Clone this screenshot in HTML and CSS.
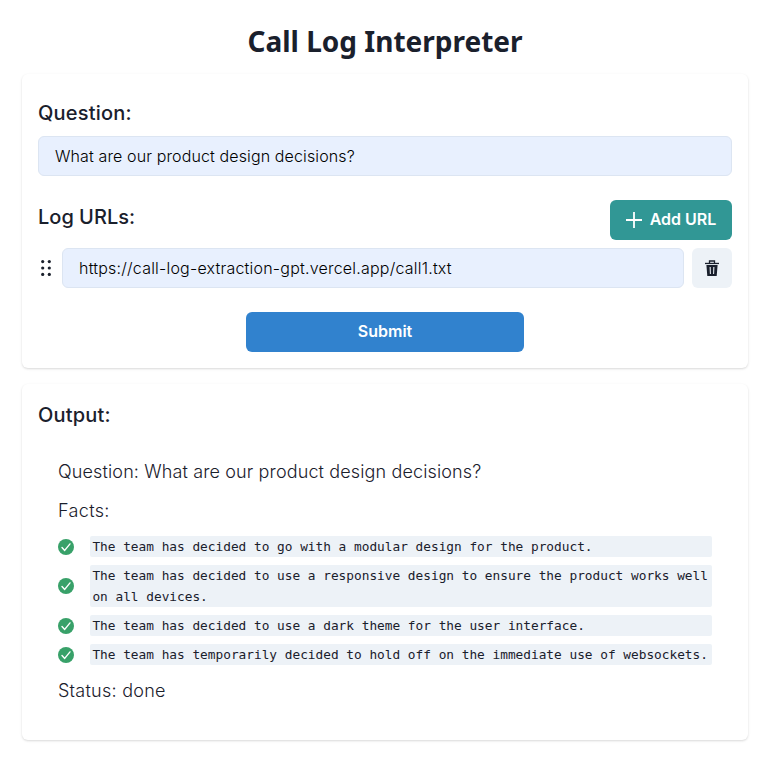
FILE: index.html
```html
<!DOCTYPE html>
<html lang="en">
<head>
<meta charset="utf-8">
<title>Call Log Interpreter</title>
<link rel="stylesheet" href="styles.css">
</head>
<body>
<main class="page">
  <h1 class="title"><span>Call Log Interpreter</span></h1>
  <section class="card form">
    <h2 class="heading spaced">Question:</h2>
    <div class="field question">What are our product design decisions?</div>
    <div class="urls-head">
      <h2 class="heading">Log URLs:</h2>
      <button class="btn add"><svg width="16" height="16" viewBox="0 0 16 16"><path d="M8 0v16M0 8h16" stroke="currentColor" stroke-width="1.8"/></svg><span class="label">Add URL</span></button>
    </div>
    <div class="url-row">
      <svg class="grip" width="16" height="16" viewBox="0 0 16 16" fill="currentColor"><circle cx="4.7" cy="1.6" r="1.6"/><circle cx="11.3" cy="1.6" r="1.6"/><circle cx="4.7" cy="8" r="1.6"/><circle cx="11.3" cy="8" r="1.6"/><circle cx="4.7" cy="14.4" r="1.6"/><circle cx="11.3" cy="14.4" r="1.6"/></svg>
      <div class="field url">https://call-log-extraction-gpt.vercel.app/call1.txt</div>
      <button class="btn trash" aria-label="Delete"><svg width="16" height="16" viewBox="0 0 16 16"><path d="M5.5 3V1h5v2" fill="none" stroke="currentColor" stroke-width="1.3"/><path d="M1 2.8h14v1.3H1z" fill="currentColor"/><path fill="currentColor" fill-rule="evenodd" d="M2.4 5h11.2l-.9 11H3.3zM5.6 7l.3 7h1l-.2-7zM9.3 7l-.2 7h1l.3-7z"/></svg></button>
    </div>
    <button class="btn submit"><span class="label">Submit</span></button>
  </section>
  <section class="card output">
    <h2 class="heading spaced">Output:</h2>
    <div class="result">
      <p class="line ask">Question: What are our product design decisions?</p>
      <p class="line facts-title">Facts:</p>
      <ul class="facts">
        <li><svg class="check" viewBox="0 0 16 16"><circle cx="8" cy="8" r="8" fill="#38a169"/><path d="M4 8.5l2.7 2.9L12 4.9" fill="none" stroke="#fff" stroke-width="1.4" stroke-linecap="round" stroke-linejoin="round"/></svg><code>The team has decided to go with a modular design for the product.</code></li>
        <li><svg class="check" viewBox="0 0 16 16"><circle cx="8" cy="8" r="8" fill="#38a169"/><path d="M4 8.5l2.7 2.9L12 4.9" fill="none" stroke="#fff" stroke-width="1.4" stroke-linecap="round" stroke-linejoin="round"/></svg><code>The team has decided to use a responsive design to ensure the product works well on all devices.</code></li>
        <li><svg class="check" viewBox="0 0 16 16"><circle cx="8" cy="8" r="8" fill="#38a169"/><path d="M4 8.5l2.7 2.9L12 4.9" fill="none" stroke="#fff" stroke-width="1.4" stroke-linecap="round" stroke-linejoin="round"/></svg><code>The team has decided to use a dark theme for the user interface.</code></li>
        <li><svg class="check" viewBox="0 0 16 16"><circle cx="8" cy="8" r="8" fill="#38a169"/><path d="M4 8.5l2.7 2.9L12 4.9" fill="none" stroke="#fff" stroke-width="1.4" stroke-linecap="round" stroke-linejoin="round"/></svg><code>The team has temporarily decided to hold off on the immediate use of websockets.</code></li>
      </ul>
      <p class="line status">Status: done</p>
    </div>
  </section>
</main>
</body>
</html>
```
FILE: styles.css
```css
* { box-sizing: border-box; }
body { margin: 0; background: #fff; color: #1a202c; font-family: Inter, "Liberation Sans", sans-serif; font-size: 16px; line-height: 24px; }
h1, h2, p, ul { margin: 0; padding: 0; }
.page { width: 726px; margin-left: 22px; padding: 23px 0 29px; display: flex; flex-direction: column; }
.title { font-family: "Noto Sans", "Open Sans", sans-serif; font-weight: 700; font-size: 28px; line-height: 36px; text-align: center; margin-bottom: 15px; }
.card { border-radius: 6px; padding: 0 16px; box-shadow: 0 1px 3px rgba(0,0,0,.1), 0 1px 2px rgba(0,0,0,.06); }
.form { height: 294px; padding-top: 27px; display: flex; flex-direction: column; }
.heading { font-size: 20px; font-weight: 500; line-height: 24px; }
.spaced { letter-spacing: .2px; }
.field { height: 40px; border: 1px solid #dce5f2; border-radius: 6px; background: #e8f0fe; color: #000; padding: 0 16px; line-height: 38px; font-weight: 300; }
.question { margin-top: 11px; letter-spacing: .12px; }
.urls-head { display: flex; justify-content: space-between; margin-top: 24px; height: 40px; }
.urls-head .heading { margin-top: 5px; }
.btn { border: 0; border-radius: 6px; height: 40px; padding: 0; font: 600 16px/38px Inter, sans-serif; color: #fff; display: flex; align-items: center; justify-content: center; }
.label { height: 40px; }
.add { width: 122px; background: #319795; gap: 8px; }
.url-row { display: flex; align-items: center; gap: 8px; margin-top: 8px; }
.url { flex: 1; letter-spacing: .21px; }
.trash { width: 40px; background: #edf2f7; color: #1a202c; }
.submit { width: 278px; background: #3182ce; margin: 24px auto 0; }
.output { margin-top: 16px; height: 356px; padding-top: 19px; }
.result { padding: 0 20px; margin-top: 33px; }
.line { font-size: 18px; font-weight: 300; line-height: 24px; letter-spacing: .25px; }
.ask { margin-bottom: 15px; letter-spacing: .13px; }
.facts-title { letter-spacing: .35px; }
.facts { list-style: none; display: flex; flex-direction: column; gap: 8px; margin: 13px 0 14px; }
.facts li { display: flex; align-items: center; gap: 16px; }
.check { width: 16px; height: 16px; flex: none; }
code { flex: 1; background: #edf2f7; border-radius: 2px; padding: 0 2.4px; font-family: "DejaVu Sans Mono", monospace; font-size: 12.8px; line-height: 21px; letter-spacing: -.01px; }
```
